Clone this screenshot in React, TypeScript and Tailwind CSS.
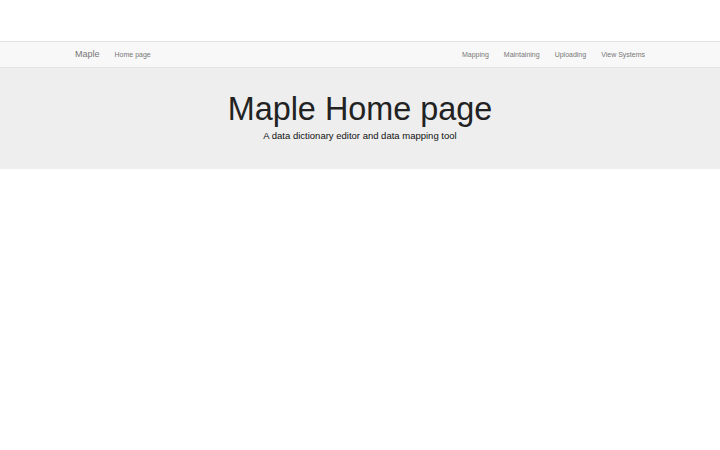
const leftLinks = ["Home page"];
const rightLinks = ["Mapping", "Maintaining", "Uploading", "View Systems"];

export default function App() {
  return (
    <div className="min-h-[450px] bg-white pt-[41px] font-['Liberation_Sans',Arial,sans-serif] text-[#333]">
      <nav className="border-t border-b border-[#e3e3e3] bg-[#f8f8f8]">
        <div className="mx-auto flex h-[25px] w-[585px] items-center justify-between pt-px">
          <div className="flex items-center">
            <span className="px-[7.5px] text-[9px] text-[#777]">Maple</span>
            {leftLinks.map((l) => (
              <span key={l} className="px-[7.5px] text-[7px] text-[#777]">
                {l}
              </span>
            ))}
          </div>
          <div className="flex items-center">
            {rightLinks.map((l) => (
              <span key={l} className="px-[7.5px] text-[7px] text-[#777]">
                {l}
              </span>
            ))}
          </div>
        </div>
      </nav>
      <div className="bg-[#eeeeee] pt-[24px] pb-[26px] text-center">
        <h1 className="text-[32.4px] leading-[35px] text-[#222]">Maple Home page</h1>
        <p className="mt-[2px] text-[9.5px] leading-[14px] text-[#111]">
          A data dictionary editor and data mapping tool
        </p>
      </div>
    </div>
  );
}
